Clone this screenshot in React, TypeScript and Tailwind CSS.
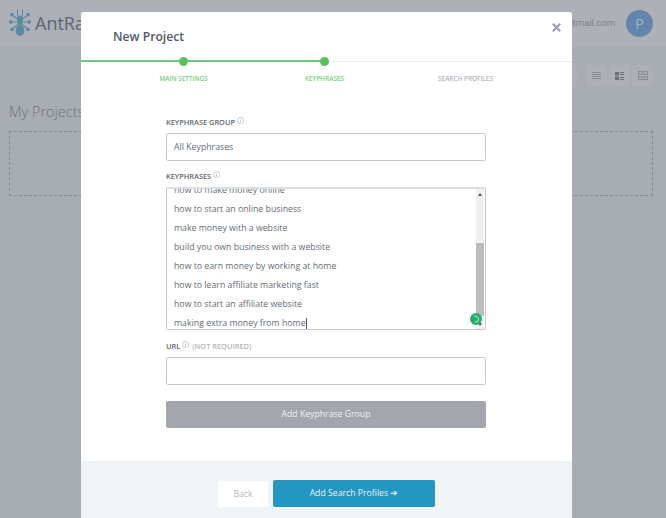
const phrases = [
  "how to make money online",
  "how to start an online business",
  "make money with a website",
  "build you own business with a website",
  "how to earn money by working at home",
  "how to learn affiliate marketing fast",
  "how to start an affiliate website",
];

function InfoIcon() {
  return (
    <svg width="7" height="7" viewBox="0 0 8 8" fill="none" stroke="#a9adb2" strokeWidth="0.7" className="ml-[2px] mb-[5px] shrink-0">
      <circle cx="4" cy="4" r="3.5" />
      <path d="M4 3.4v2.6M4 2v.7" />
    </svg>
  );
}

function AntLogo() {
  return (
    <svg width="22" height="28" viewBox="0 0 22 28" fill="none" stroke="#5a8ba1" strokeWidth="1.100" strokeLinecap="round">
      <path d="M8.500 1v5l1.500 2M13.500 1v5L12 8" />
      <path d="M3 6l4 3 2 1M19 6l-4 3-2 1M2 13h7M20 13h-7M3 20l4-3 2-1.500M19 20l-4-3-2-1.500" />
      <ellipse cx="11" cy="10" rx="2.600" ry="2.600" fill="#5a8ba1" />
      <ellipse cx="11" cy="14" rx="1.800" ry="1.800" fill="#5a8ba1" />
      <ellipse cx="11" cy="21.500" rx="3.800" ry="5" fill="#5a8ba1" />
      <circle cx="3" cy="5.500" r="1.300" fill="#5a8ba1" />
      <circle cx="19" cy="5.500" r="1.300" fill="#5a8ba1" />
      <circle cx="1.800" cy="13" r="1.300" fill="#5a8ba1" />
      <circle cx="20.200" cy="13" r="1.300" fill="#5a8ba1" />
      <circle cx="3" cy="20.500" r="1.300" fill="#5a8ba1" />
      <circle cx="19" cy="20.500" r="1.300" fill="#5a8ba1" />
    </svg>
  );
}

function Background() {
  return (
    <div className="h-[518px] bg-[#a8acb3]">
      <div className="h-[46px] bg-[#adb0b6] flex items-center justify-between pl-[9px] pr-[13px]">
        <div className="flex items-center gap-[4px]">
          <AntLogo />
          <span className="text-[18px] font-medium text-[#5c6570]">AntRank</span>
        </div>
        <div className="flex items-center gap-[11px]">
          <span className="text-[9.500px] text-[#7c8089] font-['Roboto',sans-serif]">user@hotmail.com</span>
          <div className="w-[27px] h-[27px] rounded-full bg-[#6485aa] text-[#9db3cc] text-[14px] flex items-center justify-center">P</div>
        </div>
      </div>
      <div className="flex justify-end gap-[2px] pr-[13px] pt-[19px]">
        <div className="w-[21px] h-[21px] mr-[7px] rounded-[2px] bg-[#adb1b7]" />
        <div className="w-[21px] h-[21px] rounded-[2px] bg-[#adb1b7] flex items-center justify-center">
          <svg width="9" height="8" viewBox="0 0 9 8" fill="none" stroke="#888c94">
            <path d="M0 .5h9M0 2.500h9M0 4.500h9M0 6.500h9" />
          </svg>
        </div>
        <div className="w-[21px] h-[21px] rounded-[2px] bg-[#adb1b7] flex items-center justify-center">
          <svg width="9" height="8" viewBox="0 0 9 8" fill="#696e77">
            <rect width="4" height="3.500" />
            <rect y="4.500" width="4" height="3.500" />
            <path d="M5 0h4v1H5zM5 2h4v1H5zM5 5h4v1H5zM5 7h4v1H5z" />
          </svg>
        </div>
        <div className="w-[21px] h-[21px] rounded-[2px] bg-[#adb1b7] flex items-center justify-center">
          <svg width="10" height="9" viewBox="0 0 10 9" fill="none" stroke="#888c94">
            <rect x=".5" y=".5" width="3.500" height="3" />
            <rect x="6" y=".5" width="3.500" height="3" />
            <rect x=".5" y="5.500" width="3.500" height="3" />
            <rect x="6" y="5.500" width="3.500" height="3" />
          </svg>
        </div>
      </div>
      <div className="pl-[9px] pr-[13px] pt-[15px]">
        <div className="text-[14.500px] leading-[22px] font-light text-[#6f747d]">My Projects</div>
        <div className="mt-[8px] h-[65px] border border-dashed border-[#84888f]" />
      </div>
    </div>
  );
}

export default function App() {
  return (
    <div className="relative w-[666px] h-[518px] overflow-hidden font-['Open_Sans',sans-serif]">
      <Background />
      <div className="absolute left-[81px] top-[12px] w-[491px] h-[506px] bg-white rounded-t-[3px] flex flex-col">
        <div className="h-[49px] relative pl-[32px] pt-[15px]">
          <h2 className="text-[12.200px] leading-[20px] font-semibold text-[#4f5863]">New Project</h2>
          <button className="absolute right-[11px] top-[11px] text-[#9a9fa6]">
            <svg width="9" height="9" viewBox="0 0 9 9" stroke="currentColor" strokeWidth="2.200">
              <path d="M.8.8l7.400 7.400M8.200.8L.8 8.200" />
            </svg>
          </button>
        </div>
        <div className="relative h-px bg-[#eceef0]">
          <div className="absolute left-0 top-[-1px] w-[243px] h-[2px] bg-[#74c677]" />
          <div className="absolute left-[98px] top-[-4px] w-[9px] h-[9px] rounded-full bg-[#5cbf60]" />
          <div className="absolute left-[239px] top-[-4px] w-[9px] h-[9px] rounded-full bg-[#5cbf60]" />
        </div>
        <div className="grid grid-cols-[141px_141px_141px] pl-[32px] pt-[12px] text-[6.400px] leading-[10px] font-semibold text-center">
          <span className="text-[#78cf7c]">MAIN SETTINGS</span>
          <span className="text-[#78cf7c]">KEYPHRASES</span>
          <span className="text-[#b1b5ba]">SEARCH PROFILES</span>
        </div>
        <div className="flex-1 pl-[85px] pr-[86px] pt-[34px]">
          <label className="flex items-center h-[10px] text-[7.400px] font-semibold text-[#5f6770]">
            KEYPHRASE GROUP <InfoIcon />
          </label>
          <div className="mt-[5px] h-[28px] border border-[#c6c9cc] rounded-[2px] flex items-center px-[7px] pt-[1px] text-[8.750px] text-[#666c74]">
            All Keyphrases
          </div>
          <label className="mt-[11px] flex items-center h-[10px] text-[7.400px] font-semibold text-[#5f6770]">
            KEYPHRASES <InfoIcon />
          </label>
          <div className="mt-[5px] h-[143px] border border-[#c6c9cc] border-t-2 border-t-[#dcdee0] rounded-[2px] flex relative">
            <div className="flex-1 overflow-hidden flex flex-col justify-end px-[7px] text-[8.750px] leading-[19px] text-[#666c74]">
              {phrases.map((p) => (
                <div key={p} className="shrink-0">{p}</div>
              ))}
              <div className="shrink-0 flex items-center -mb-[4px]">
                making extra money from home
                <span className="w-px h-[12px] bg-[#555]" />
              </div>
            </div>
            <div className="w-[8px] mr-[1px] bg-[#f0f0f0] flex flex-col">
              <div className="h-[6px] flex items-center justify-center text-[#555] mt-[2px]">
                <svg width="4" height="3" viewBox="0 0 4 3" fill="currentColor"><path d="M2 0l2 3H0z" /></svg>
              </div>
              <div className="mt-[46px] h-[73px] bg-[#bcbcbc]" />
              <div className="mt-auto mb-[2px] h-[6px] flex items-center justify-center text-[#555]">
                <svg width="4" height="3" viewBox="0 0 4 3" fill="currentColor"><path d="M2 3l2-3H0z" /></svg>
              </div>
            </div>
            <div className="absolute right-[3px] bottom-[4px] w-[12px] h-[12px] rounded-full bg-[#27ae6a] flex items-center justify-center">
              <svg width="8" height="8" viewBox="0 0 8 8" fill="none" stroke="#d7f2e3" strokeWidth="1">
                <path d="M2.500 1.200A3 3 0 1 1 3 7" />
              </svg>
            </div>
          </div>
          <label className="mt-[12px] flex items-center h-[10px] text-[7.400px] font-semibold text-[#5f6770]">
            URL <InfoIcon /> <span className="ml-[3px] text-[#b1b5ba]">(NOT REQUIRED)</span>
          </label>
          <div className="mt-[5px] h-[28px] border border-[#c6c9cc] rounded-[2px]" />
          <button className="mt-[16px] w-full h-[27px] rounded-[2px] pt-[1px] bg-[#a3a6ac] text-[8.700px] font-medium text-[#eff0f1]">
            Add Keyphrase Group
          </button>
        </div>
        <div className="h-[57px] bg-[#f0f4f7] flex items-start pl-[137px] pt-[19px] gap-[5px]">
          <button className="w-[50px] h-[26px] mt-[1px] pt-[1px] bg-white rounded-[2px] text-[8.700px] text-[#b4b7bb]">Back</button>
          <button className="w-[162px] h-[27px] pt-[1px] bg-[#2396c1] rounded-[2px] text-[8.700px] font-medium text-[#e8f4f9]">Add Search Profiles ➔</button>
        </div>
      </div>
    </div>
  );
}
